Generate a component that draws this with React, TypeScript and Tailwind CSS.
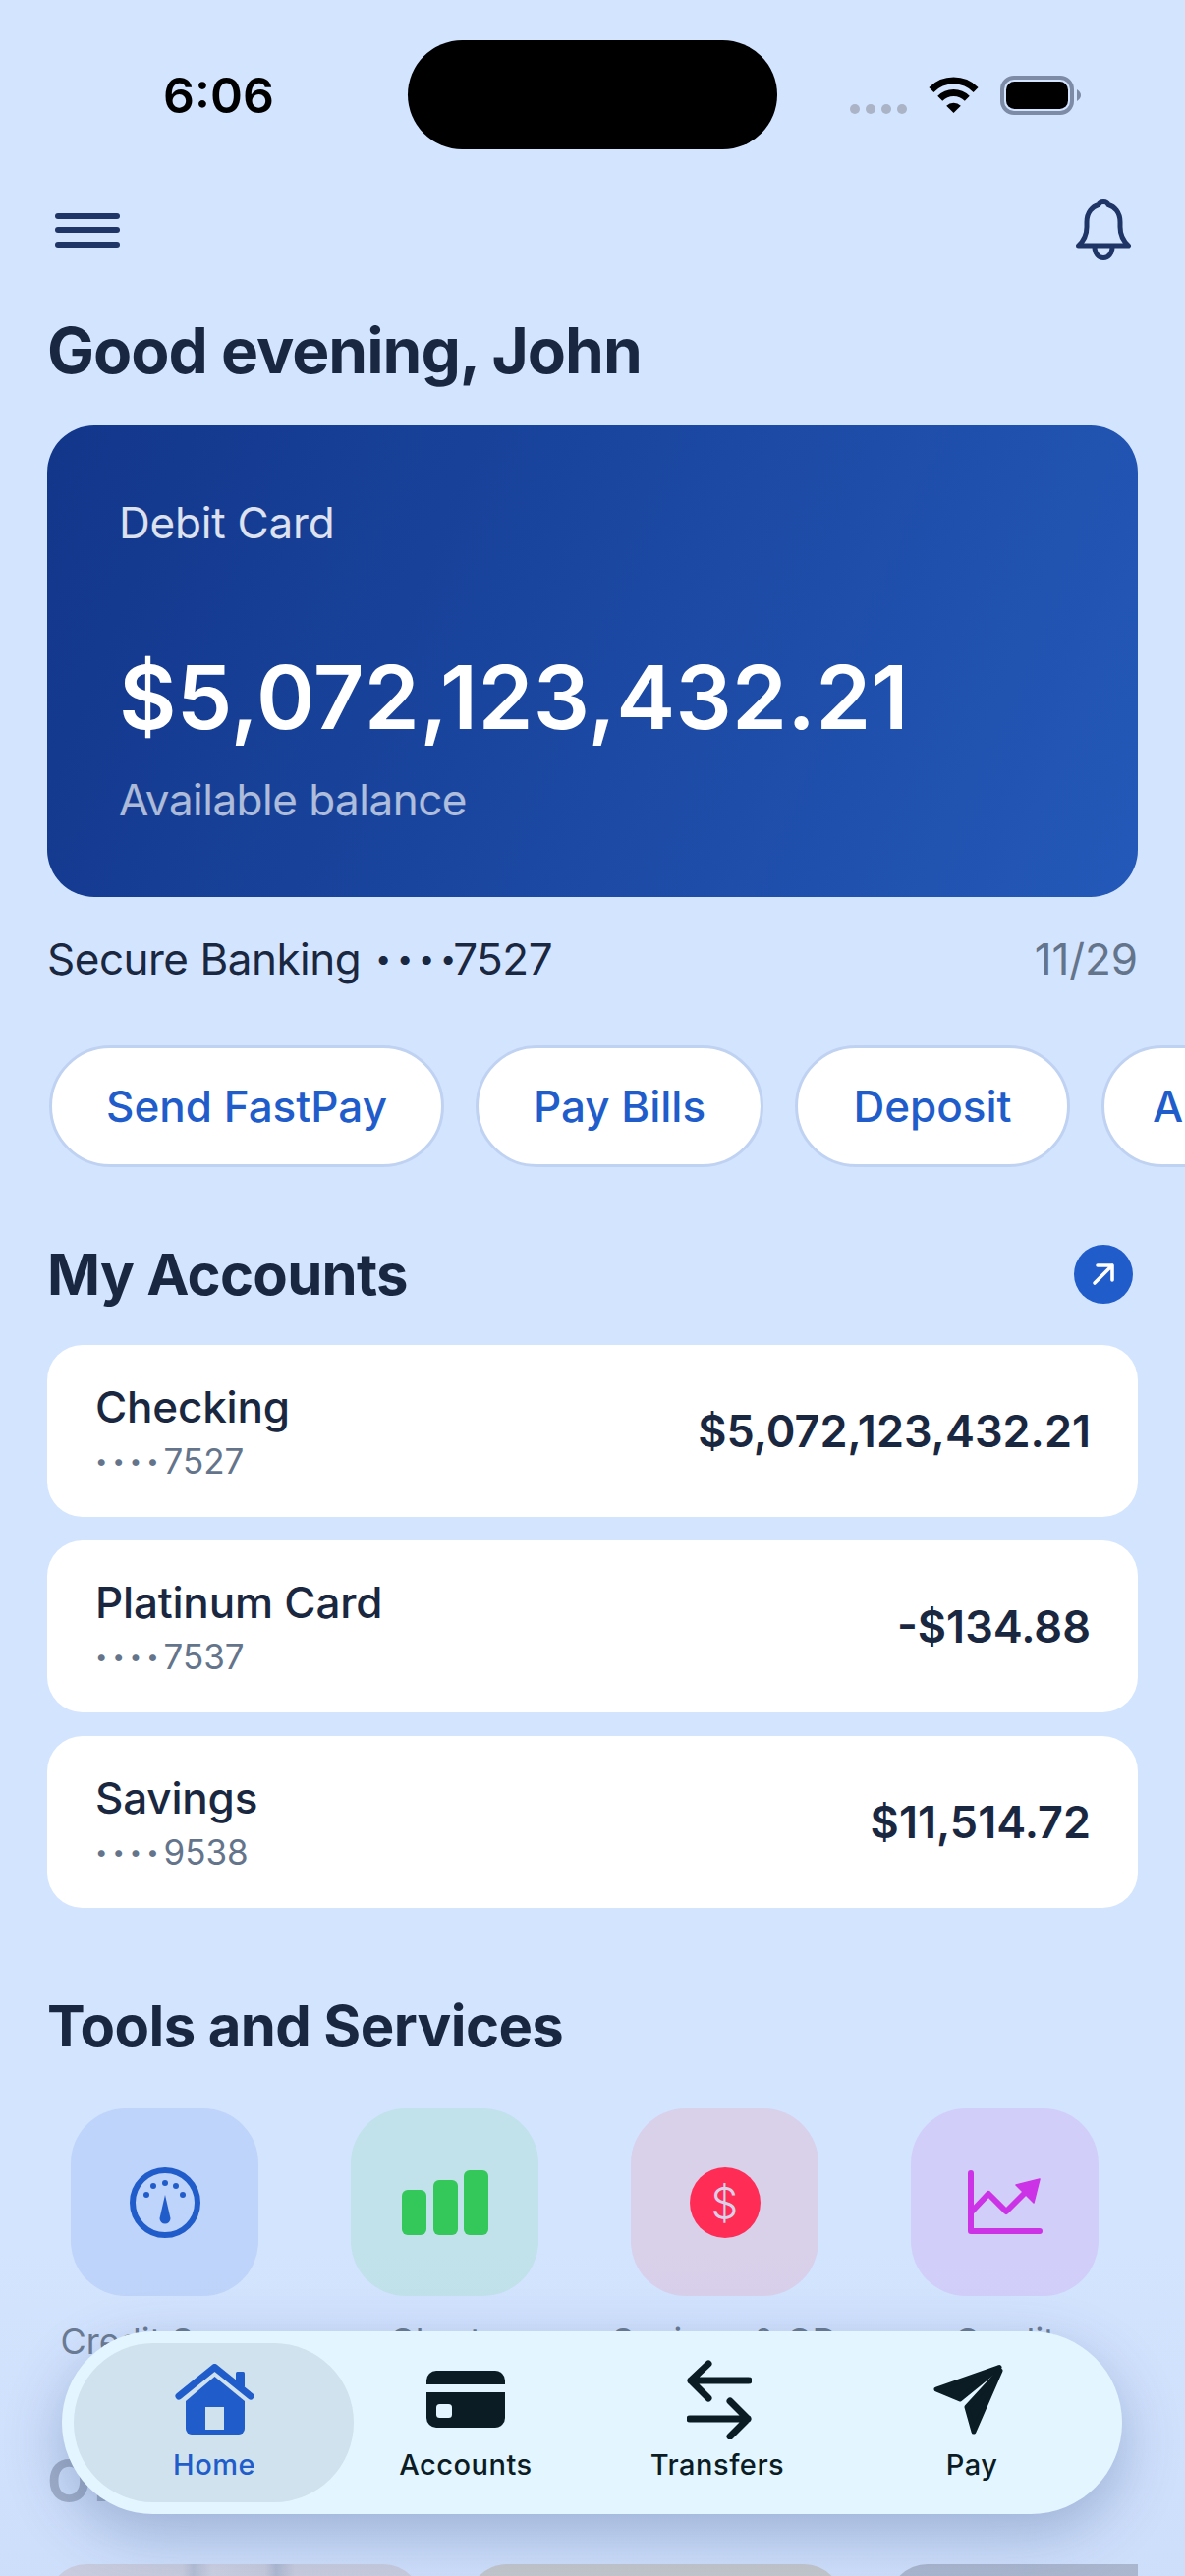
import React from "react";

const accounts = [
  { name: "Checking", num: "7527", amount: "$5,072,123,432.21" },
  { name: "Platinum Card", num: "7537", amount: "-$134.88" },
  { name: "Savings", num: "9538", amount: "$11,514.72" },
];

const actions = [
  { label: "Send FastPay", width: "w-[402px]" },
  { label: "Pay Bills", width: "w-[293px]" },
  { label: "Deposit", width: "w-[280px]" },
  { label: "Autopay", width: "w-[280px]" },
];

function Gauge() {
  return (
    <svg width="72" height="72" viewBox="0 0 72 72" fill="#215ccb">
      <circle cx="36" cy="36" r="33" fill="none" stroke="#215ccb" strokeWidth="6" />
      <circle cx="17" cy="28" r="3" />
      <circle cx="24" cy="19" r="3" />
      <circle cx="36" cy="16" r="3" />
      <circle cx="47" cy="19" r="3" />
      <circle cx="54" cy="28" r="3" />
      <path d="M36 28 L41.5 52 A5.5 5.5 0 1 1 30.5 52 Z" />
    </svg>
  );
}

function Bars() {
  return (
    <svg width="88" height="66" viewBox="0 0 88 66" fill="#34c759">
      <rect x="0" y="20" width="25" height="46" rx="6" />
      <rect x="32" y="10" width="25" height="56" rx="6" />
      <rect x="63" y="0" width="25" height="66" rx="6" />
    </svg>
  );
}

function Trend() {
  return (
    <svg width="76" height="66" viewBox="0 0 76 66" fill="none" stroke="#cc33e6" strokeWidth="6" strokeLinecap="round" strokeLinejoin="round">
      <path d="M3 3 V62 H73" />
      <path d="M4 42 L21 24 L39 42 L58 23" />
      <path d="M73 9 L49 15 L67 33 Z" fill="#cc33e6" stroke="#cc33e6" strokeWidth="1.5" />
    </svg>
  );
}

function Bell() {
  return (
    <svg width="58" height="62" viewBox="0 0 58 62" fill="none" stroke="#1f3566" strokeWidth="5" strokeLinecap="round" strokeLinejoin="round">
      <path d="M3.5 47 C8 43 12 38 12 28 V23 C12 13 18 7 24 5.5 C25 3 27 2.5 29 2.5 C31 2.5 33 3 34 5.5 C40 7 46 13 46 23 V28 C46 38 50 43 54.5 47 Z" />
      <path d="M20 48 C20 55 24 59.5 29 59.5 C34 59.5 38 55 38 48" />
    </svg>
  );
}

function Wifi() {
  return (
    <svg width="51" height="37" viewBox="0 0 51 37">
      <path d="M2.9 13.4 A32 32 0 0 1 48.1 13.4" fill="none" stroke="#000" strokeWidth="7" />
      <path d="M11.7 22.2 A19.5 19.5 0 0 1 39.3 22.2" fill="none" stroke="#000" strokeWidth="7" />
      <path d="M25.5 37 L18.2 29.7 A10.3 10.3 0 0 1 32.8 29.7 Z" fill="#000" />
    </svg>
  );
}

function Battery() {
  return (
    <svg width="82" height="40" viewBox="0 0 82 40">
      <rect x="2" y="2" width="71" height="36" rx="12" fill="none" stroke="#7d8ba6" strokeWidth="4" />
      <rect x="6" y="6" width="63" height="28" rx="8.5" fill="#000" />
      <path d="M78 14 C81 16 82 18 82 20 C82 22 81 24 78 26 Z" fill="#7d8ba6" />
    </svg>
  );
}

function HomeIcon() {
  return (
    <svg width="81" height="72" viewBox="0 0 81 72">
      <rect x="62" y="8" width="9" height="16" rx="1.5" fill="#215ccb" />
      <path d="M4 33 L40.5 3.5 L77 33" fill="none" stroke="#215ccb" strokeWidth="7" strokeLinecap="round" strokeLinejoin="round" />
      <path d="M40.5 13 L71 38 V66 A6 6 0 0 1 65 72 H17 A6 6 0 0 1 11 66 V38 Z" fill="#215ccb" />
      <rect x="31" y="44" width="19" height="23" fill="#cfe2ed" />
    </svg>
  );
}

function CardIcon() {
  return (
    <svg width="80" height="58" viewBox="0 0 80 58">
      <path d="M0 14 V10 A10 10 0 0 1 10 0 H70 A10 10 0 0 1 80 10 V14 Z" fill="#0c1c25" />
      <path d="M0 22 H80 V48 A10 10 0 0 1 70 58 H10 A10 10 0 0 1 0 48 Z" fill="#0c1c25" />
      <rect x="10" y="34" width="16" height="14" rx="3.5" fill="#e3f6ff" />
    </svg>
  );
}

function TransferIcon() {
  return (
    <svg className="ml-[3px]" width="66" height="81" viewBox="0 0 66 81" fill="none" stroke="#0c1c25" strokeWidth="7" strokeLinecap="round" strokeLinejoin="round">
      <path d="M63 21 H4 M22 4 L4 21 L22 39" />
      <path d="M3 60 H62 M44 42 L62 60 L44 78" />
    </svg>
  );
}

function PayIcon() {
  return (
    <svg className="mr-[7px]" width="71" height="72" viewBox="0 0 71 72" fill="#0c1c25" stroke="#0c1c25" strokeWidth="5" strokeLinejoin="round">
      <path d="M67 3.5 L3 26 L27 36 Z" />
      <path d="M68 7 L34 44 L41 69 Z" />
    </svg>
  );
}

function ArrowIcon() {
  return (
    <svg width="30" height="30" viewBox="0 0 30 30" fill="none" stroke="#fff" strokeWidth="3.6" strokeLinecap="round" strokeLinejoin="round">
      <path d="M6 24 L24 6 M9 6 H24 V21" />
    </svg>
  );
}

function Tile({ bg, label, children }: { bg: string; label: string; children: React.ReactNode }) {
  return (
    <div className="flex w-[285px] flex-col items-center">
      <div className={`flex h-[191px] w-[191px] items-center justify-center rounded-[56px] ${bg}`}>{children}</div>
      <div className="mt-[24px] text-[36px] leading-[44px] text-[#64748b]">{label}</div>
    </div>
  );
}

function Tab({ label, active, wide, children }: { label: string; active?: boolean; wide?: boolean; children: React.ReactNode }) {
  return (
    <div className={`flex h-[162px] flex-col items-center ${wide ? "w-[262px]" : "w-[256px]"} ${active ? "text-[#215ccb]" : "text-[#0c1c25]"}`}>
      <div className="flex h-[96px] items-center justify-center pt-[18px]">{children}</div>
      <div className="mt-[10px] text-[29px] font-medium leading-[36px] tracking-[0.5px]">{label}</div>
    </div>
  );
}

export default function App() {
  return (
    <div className="relative h-[2622px] w-[1206px] overflow-hidden bg-[#d3e4ff] font-['Inter',sans-serif] text-[#1a2740]">
      {/* status bar */}
      <div className="mt-[41px] flex h-[111px]">
        <div className="flex w-[415px] items-center justify-center pl-[30px] pt-[2px] text-[50px] font-semibold leading-[111px] text-black">6:06</div>
        <div className="h-[111px] w-[376px] rounded-[56px] bg-black" />
        <div className="flex flex-1 pl-[74px] pt-[37px]">
          <div className="mt-[28px] flex h-[10px] gap-[6px]">
            <span className="h-[10px] w-[10px] rounded-full bg-[#aab4c6]" />
            <span className="h-[10px] w-[10px] rounded-full bg-[#aab4c6]" />
            <span className="h-[10px] w-[10px] rounded-full bg-[#aab4c6]" />
            <span className="h-[10px] w-[10px] rounded-full bg-[#aab4c6]" />
          </div>
          <div className="ml-[22px]"><Wifi /></div>
          <div className="ml-[22px] -mt-[1px]"><Battery /></div>
        </div>
      </div>

      {/* header */}
      <div className="mt-[51px] flex h-[62px] items-center justify-between pl-[56px] pr-[54px]">
        <div className="flex w-[66px] flex-col gap-[8.5px]">
          <span className="h-[6px] rounded-full bg-[#1f3566]" />
          <span className="h-[6px] rounded-full bg-[#1f3566]" />
          <span className="h-[6px] rounded-full bg-[#1f3566]" />
        </div>
        <Bell />
      </div>

      <div className="mx-[48px]">
        <h1 className="mt-[56px] text-[64px] font-bold leading-[72px] tracking-[-1px]">Good evening, John</h1>

        {/* debit card */}
        <div className="mt-[40px] h-[480px] rounded-[48px] bg-[linear-gradient(112deg,#12368a,#2459b9)] pl-[73px] pt-[73px] text-white">
          <div className="text-[44px] leading-[52px] tracking-[-0.2px] text-white/85">Debit Card</div>
          <div className="mt-[102px] text-[90px] font-semibold leading-[100px] tracking-[0.25px]">$5,072,123,432.21</div>
          <div className="mt-[28px] text-[44px] leading-[52px] tracking-[-0.5px] text-white/65">Available balance</div>
        </div>

        <div className="mt-[37px] flex items-center justify-between text-[44px] leading-[52px]">
          <span className="tracking-[-0.5px]">
            Secure Banking <span className="-mr-[9px] ml-[3px] align-[6px] text-[29px] tracking-[5.7px]">••••</span>7527
          </span>
          <span className="tracking-[-0.1px] text-[#64748b]">11/29</span>
        </div>
      </div>

      {/* quick actions */}
      <div className="ml-[50px] mt-[62px] flex gap-[32px] overflow-hidden">
        {actions.map((a) => (
          <div key={a.label} className={`flex h-[124px] shrink-0 items-center justify-center rounded-full border-[3px] border-[#c0d2f2] bg-white text-[44px] font-medium text-[#215ccb] ${a.width}`}>
            {a.label}
          </div>
        ))}
      </div>

      <div className="mx-[48px]">
        <div className="mt-[79px] flex h-[60px] items-center justify-between pr-[5px]">
          <h2 className="text-[58px] font-bold leading-[60px] tracking-[-0.7px]">My Accounts</h2>
          <div className="flex h-[60px] w-[60px] items-center justify-center rounded-full bg-[#215ccb]">
            <ArrowIcon />
          </div>
        </div>

        <div className="mt-[42px] flex flex-col gap-[24px]">
          {accounts.map((a) => (
            <div key={a.name} className="flex h-[175px] items-center justify-between rounded-[36px] bg-white pl-[49px] pr-[48px]">
              <div>
                <div className="text-[44px] font-medium leading-[52px] tracking-[-0.2px]">{a.name}</div>
                <div className="mt-[9px] text-[35px] leading-[40px] text-[#64748b]">
                  <span className="align-[5px] text-[22px] tracking-[5px]">••••</span>
                  {a.num}
                </div>
              </div>
              <div className="text-[45px] font-semibold leading-[52px]">{a.amount}</div>
            </div>
          ))}
        </div>

        <h2 className="mt-[84px] text-[58px] font-bold leading-[72px] tracking-[-0.6px]">Tools and Services</h2>
      </div>

      {/* tools */}
      <div className="ml-[25px] mt-[48px] flex">
        <Tile bg="bg-[#bfd4fa]" label="Credit Score"><Gauge /></Tile>
        <Tile bg="bg-[#c1e2ea]" label="Charts"><Bars /></Tile>
        <Tile bg="bg-[#d9d0ea]" label="Savings & CD">
          <div className="flex h-[72px] w-[72px] items-center justify-center rounded-full bg-[#ff2d55] text-[44px] font-light leading-none text-[#d9d0ea]">$</div>
        </Tile>
        <Tile bg="bg-[#d2cefa]" label="Credit"><Trend /></Tile>
      </div>

      <h2 className="ml-[48px] mt-[84px] text-[58px] font-bold leading-[72px] text-[#98a6bf]">Offers</h2>

      <div className="mx-[48px] mt-[49px] flex gap-[46px] overflow-hidden">
        <div className="h-[200px] w-[382px] shrink-0 rounded-[40px] bg-[linear-gradient(90deg,#ccc9d6_0%,#ccc9d6_36%,#aeb6c9_39%,#d2cfdc_44%,#c8c6d4_58%,#a5aec4_61%,#ccc9d6_66%,#ccc9d6_100%)]" />
        <div className="h-[200px] w-[382px] shrink-0 rounded-[40px] bg-[#c4c1bc]" />
        <div className="h-[200px] w-[382px] shrink-0 rounded-[40px] bg-[#a1abc0]" />
      </div>

      {/* fade at the bottom of the page */}
      <div className="pointer-events-none absolute inset-x-0 bottom-0 h-[332px] bg-gradient-to-b from-[#d3e4ff]/0 to-[#c0d2f0]/30" />

      {/* tab bar */}
      <div className="absolute left-[63px] top-[2373px] flex h-[186px] w-[1079px] items-center rounded-full bg-[#e3f6ff] shadow-[0_20px_60px_rgba(40,65,125,0.3)]">
        <div className="absolute left-[12px] top-[12px] h-[162px] w-[285px] rounded-full bg-[#cfe2ed]" />
        <div className="relative ml-[27px] flex">
          <Tab label="Home" active><HomeIcon /></Tab>
          <Tab label="Accounts"><CardIcon /></Tab>
          <Tab label="Transfers"><TransferIcon /></Tab>
          <Tab label="Pay" wide><PayIcon /></Tab>
        </div>
      </div>
    </div>
  );
}
